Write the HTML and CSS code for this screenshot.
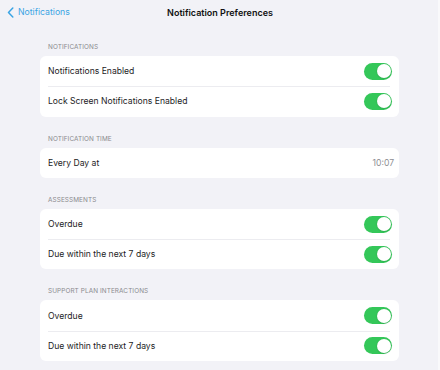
FILE: index.html
```html
<!DOCTYPE html>
<html>
<head>
<meta charset="utf-8">
<link rel="stylesheet" href="styles.css">
</head>
<body>
<div class="screen">
  <header class="nav">
    <a class="back">
      <svg class="chev" width="7" height="11" viewBox="0 0 7 11"><path d="M5.8 1 L1.5 5.5 L5.8 10" fill="none" stroke="#3aa4e4" stroke-width="1.5" stroke-linecap="round" stroke-linejoin="round"/></svg>
      <span>Notifications</span>
    </a>
    <div class="title">Notification Preferences</div>
    <div></div>
  </header>
  <main class="content">
    <section class="group first">
      <div class="group-head">NOTIFICATIONS</div>
      <div class="card">
        <div class="row"><span>Notifications Enabled</span><span class="toggle"></span></div>
        <div class="row"><span>Lock Screen Notifications Enabled</span><span class="toggle"></span></div>
      </div>
    </section>
    <section class="group">
      <div class="group-head">NOTIFICATION TIME</div>
      <div class="card">
        <div class="row time"><span>Every Day at</span><span class="value">10:07</span></div>
      </div>
    </section>
    <section class="group">
      <div class="group-head">ASSESSMENTS</div>
      <div class="card">
        <div class="row"><span>Overdue</span><span class="toggle"></span></div>
        <div class="row"><span>Due within the next 7 days</span><span class="toggle"></span></div>
      </div>
    </section>
    <section class="group">
      <div class="group-head">SUPPORT PLAN INTERACTIONS</div>
      <div class="card">
        <div class="row"><span>Overdue</span><span class="toggle"></span></div>
        <div class="row"><span>Due within the next 7 days</span><span class="toggle"></span></div>
      </div>
    </section>
  </main>
</div>
</body>
</html>
```

FILE: styles.css
```css
* { box-sizing: border-box; }
html, body { margin: 0; padding: 0; }
body {
  background: #f2f2f7;
  font-family: "Inter", "Liberation Sans", sans-serif;
  color: #1c1c1e;
  width: 440px;
  height: 370px;
  overflow: hidden;
}
.screen {
  width: 440px;
  height: 370px;
  box-shadow: inset -2px 0 0 #f9f9fb;
}
.nav {
  height: 24px;
  display: grid;
  grid-template-columns: 1fr auto 1fr;
  align-items: center;
}
.back {
  display: flex;
  align-items: center;
  gap: 4px;
  padding-left: 7px;
  color: #3aa4e4;
  font-size: 8.7px;
}
.chev { display: block; }
.title {
  font-size: 9px;
  font-weight: 600;
  color: #111;
}
.content {
  padding: 18px 41px 0 40px;
}
.group + .group { margin-top: 17px; }
.group-head {
  height: 10px;
  line-height: 10px;
  font-size: 6.4px;
  color: #8a8a8e;
  padding-left: 8px;
  margin-bottom: 4px;
  letter-spacing: 0.1px;
}
.card {
  background: #fff;
  border-radius: 6px;
  overflow: hidden;
}
.row {
  height: 30.3px;
  display: flex;
  align-items: center;
  justify-content: space-between;
  padding: 0 7px 0 8px;
  font-size: 8.6px;
  position: relative;
}
.row + .row::before {
  content: "";
  position: absolute;
  top: 0;
  left: 8px;
  right: 9px;
  height: 1px;
  background: #ececf0;
}
.row.time { padding-right: 5px; }
.value { color: #8e8e93; }
.toggle {
  width: 28px;
  height: 17px;
  border-radius: 9px;
  background: #34c759;
  position: relative;
}
.toggle::after {
  content: "";
  position: absolute;
  top: 1.5px;
  right: 1.5px;
  width: 14px;
  height: 14px;
  border-radius: 50%;
  background: #fff;
  box-shadow: 0 0.5px 1.5px rgba(0,0,0,0.2);
}
```
